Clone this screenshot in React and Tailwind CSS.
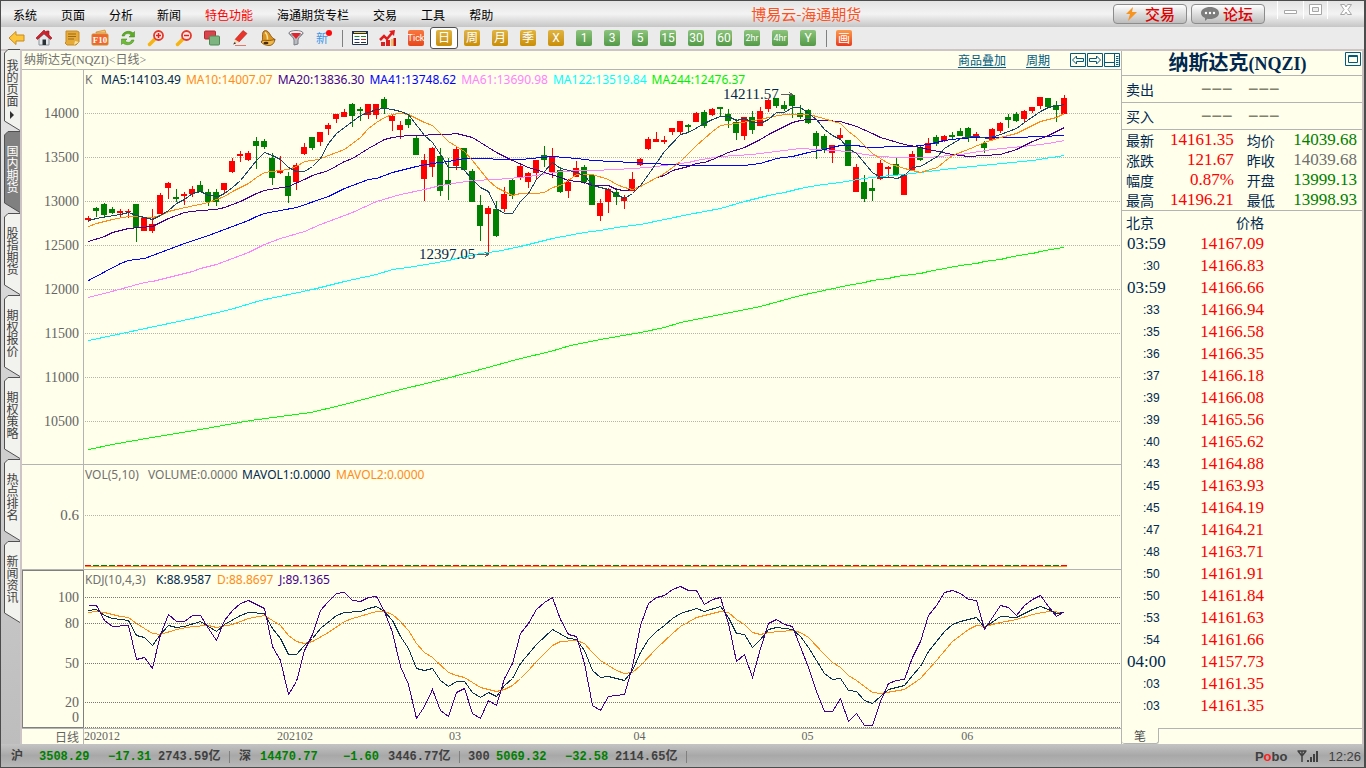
import React, { useState } from 'react';

const menuItems = ['系统', '页面', '分析', '新闻', '特色功能', '海通期货专栏', '交易', '工具', '帮助'];

const sideTabs = ['我的页面', '国内期货', '股指期货', '期权报价', '期权策略', '热点排名', '新闻资讯'];

const periods = [
  { label: '日', tone: 'gold' },
  { label: '周', tone: 'gold' },
  { label: '月', tone: 'gold' },
  { label: '季', tone: 'gold' },
  { label: 'X', tone: 'gold' },
  { label: '1', tone: 'green' },
  { label: '3', tone: 'green' },
  { label: '5', tone: 'green' },
  { label: '15', tone: 'green' },
  { label: '30', tone: 'green' },
  { label: '60', tone: 'green' },
  { label: '2hr', tone: 'green' },
  { label: '4hr', tone: 'green' },
  { label: 'Y', tone: 'green' },
];

const maLegend = [
  { text: 'MA5:14103.49', cls: 'text-[#002850]' },
  { text: 'MA10:14007.07', cls: 'text-[#ff8c14]' },
  { text: 'MA20:13836.30', cls: 'text-[#46008c]' },
  { text: 'MA41:13748.62', cls: 'text-[#0000ff]' },
  { text: 'MA61:13690.98', cls: 'text-[#ff82ff]' },
  { text: 'MA122:13519.84', cls: 'text-[#00ffff]' },
  { text: 'MA244:12476.37', cls: 'text-[#00f000]' },
];

// color, high, body top, body bottom, low
const candles = [
  ['r', 216, 218, 220, 222], ['g', 207, 208, 211, 217], ['g', 203, 204, 215, 218], ['g', 207, 209, 213, 214],
  ['r', 209, 211, 213, 217], ['r', 209, 211, 212, 218], ['g', 204, 204, 228, 242], ['r', 217, 217, 231, 231],
  ['r', 209, 224, 231, 233], ['r', 193, 195, 214, 214], ['r', 182, 183, 188, 199], ['g', 189, 197, 199, 202],
  ['r', 192, 194, 196, 205], ['r', 186, 189, 194, 197], ['g', 181, 185, 192, 192], ['g', 189, 192, 202, 206],
  ['g', 189, 192, 202, 206], ['r', 183, 183, 190, 194], ['r', 158, 161, 172, 173], ['r', 151, 154, 156, 162],
  ['r', 151, 153, 160, 161], ['g', 137, 141, 146, 169], ['g', 139, 141, 147, 149], ['g', 153, 158, 178, 185],
  ['r', 156, 171, 173, 174], ['g', 172, 176, 196, 203], ['r', 163, 165, 182, 190], ['r', 143, 147, 154, 155],
  ['g', 137, 137, 148, 150], ['r', 132, 132, 142, 146], ['r', 123, 125, 129, 135], ['r', 114, 114, 119, 123],
  ['r', 109, 112, 117, 117], ['g', 103, 104, 116, 127], ['g', 107, 109, 111, 121], ['r', 104, 104, 115, 119],
  ['r', 104, 104, 115, 119], ['g', 97, 99, 109, 114], ['r', 115, 116, 121, 131], ['r', 121, 125, 130, 139],
  ['g', 114, 119, 125, 128], ['g', 135, 138, 155, 155], ['r', 154, 160, 179, 201], ['r', 147, 148, 167, 177],
  ['g', 148, 156, 191, 196], ['g', 158, 180, 185, 200], ['r', 147, 149, 166, 170], ['g', 148, 148, 170, 171],
  ['g', 169, 171, 202, 202], ['g', 195, 205, 226, 241], ['r', 206, 208, 214, 255], ['g', 201, 209, 236, 237],
  ['r', 187, 194, 209, 212], ['g', 178, 180, 196, 199], ['r', 163, 166, 178, 180], ['r', 172, 173, 182, 188],
  ['r', 160, 160, 173, 179], ['g', 146, 155, 160, 167], ['r', 148, 156, 172, 178], ['g', 167, 170, 192, 193],
  ['r', 179, 182, 191, 198], ['r', 161, 168, 177, 177], ['g', 165, 167, 182, 184], ['g', 175, 175, 205, 205],
  ['r', 199, 203, 216, 221], ['r', 188, 189, 202, 213], ['g', 188, 192, 197, 205], ['r', 195, 198, 201, 209],
  ['r', 172, 179, 191, 191], ['r', 158, 159, 165, 166], ['r', 137, 139, 149, 150], ['r', 132, 139, 142, 142],
  ['r', 136, 140, 142, 144], ['r', 128, 128, 132, 135], ['r', 121, 121, 132, 135], ['g', 124, 125, 127, 133],
  ['r', 112, 113, 122, 122], ['g', 110, 112, 126, 128], ['r', 108, 109, 115, 116], ['g', 107, 107, 109, 117],
  ['g', 109, 114, 121, 128], ['g', 119, 122, 133, 140], ['r', 117, 117, 136, 140], ['g', 111, 117, 130, 134],
  ['r', 107, 111, 126, 126], ['r', 99, 100, 109, 112], ['g', 98, 98, 106, 108], ['g', 101, 105, 109, 111],
  ['g', 94, 95, 106, 118], ['g', 105, 113, 117, 119], ['g', 109, 110, 123, 124], ['g', 131, 133, 146, 159],
  ['g', 134, 136, 149, 153], ['r', 145, 145, 153, 163], ['r', 128, 135, 138, 140], ['g', 140, 140, 166, 166],
  ['r', 164, 167, 192, 192], ['g', 175, 182, 199, 202], ['g', 179, 188, 191, 201], ['r', 160, 163, 179, 180],
  ['r', 166, 167, 169, 177], ['g', 158, 164, 175, 175], ['r', 175, 175, 195, 195], ['r', 151, 154, 170, 170],
  ['g', 146, 147, 160, 161], ['r', 138, 143, 153, 153], ['g', 135, 137, 144, 146], ['r', 135, 136, 141, 142],
  ['g', 132, 135, 137, 139], ['g', 128, 131, 136, 136], ['g', 127, 128, 137, 142], ['r', 132, 134, 136, 141],
  ['g', 141, 143, 148, 153], ['r', 128, 129, 140, 140], ['r', 122, 123, 131, 133], ['g', 114, 117, 120, 128],
  ['g', 112, 114, 121, 122], ['r', 110, 111, 119, 122], ['r', 107, 107, 111, 113], ['r', 97, 97, 106, 109],
  ['g', 98, 98, 107, 108], ['g', 101, 105, 110, 122], ['r', 95, 98, 114, 114],
];

const priceLines = [
  {
    color: '#00ff00',
    points: '88,449 112,444 140,439 200,429 250,420 310,412 340,405 370,397 400,389 430,382 480,369 520,358 550,351 570,345 600,339 640,332 664,327 680,322 720,314 760,306 800,295 847,285 864,282 872,280 888,278 896,276 920,273 928,271 960,265 976,263 984,261 1000,259 1008,257 1024,254 1032,253 1040,251 1056,248 1064,247',
  },
  {
    color: '#00ffff',
    points: '88,340 112,335 140,329 192,318 230,309 260,300 312,289 344,281 376,274 392,269 408,267 432,263 448,260 456,258 480,253 496,251 520,246 552,238 568,235 584,232 600,230 616,227 640,224 664,219 688,214 704,211 720,208 744,201 768,195 784,192 800,188 816,185 840,182 864,178 880,176 904,174 928,171 952,168 992,164 1032,160 1064,155',
  },
  {
    color: '#ff82ff',
    points: '88,297 115,290 144,282 152,281 192,271 200,268 216,264 248,252 264,244 280,238 304,231 320,224 352,212 376,201 400,194 424,189 440,185 472,180 496,179 520,177 536,175 552,172 576,170 592,170 616,169 648,167 688,162 696,160 720,156 752,154 776,151 800,148 816,149 848,151 864,154 880,156 897,157 928,157 960,154 992,149 1032,145 1048,143 1064,140',
  },
  {
    color: '#0000ff',
    points: '88,280 120,263 128,260 136,259 144,258 184,243 208,235 248,220 256,216 264,213 280,210 296,207 328,196 344,188 368,179 376,178 392,172 416,166 432,163 448,161 464,158 488,158 496,159 520,159 552,156 576,158 592,160 632,162 688,165 704,165 744,165 760,163 776,158 792,156 808,152 824,149 840,145 856,145 868,147 880,147 888,146 912,146 928,144 944,140 960,138 976,137 1016,137 1064,135',
  },
  {
    color: '#46008c',
    points: '88,241 104,236 112,232 128,228 152,226 160,222 168,218 184,212 200,210 216,209 224,207 240,201 256,193 264,190 288,186 304,179 312,175 328,170 344,161 352,158 368,148 384,139 392,137 408,135 448,134 456,133 472,137 480,142 488,147 496,152 512,160 528,167 544,172 560,177 568,180 584,182 592,185 608,185 616,189 624,190 632,189 648,182 656,177 664,175 672,170 688,166 696,163 704,162 712,159 728,152 744,147 760,139 768,134 784,126 792,122 800,120 808,119 824,120 840,121 856,126 872,133 880,137 904,144 920,147 928,149 952,154 968,156 1000,154 1016,149 1032,141 1048,135 1064,127',
  },
  {
    color: '#ff8c14',
    points: '88,226 96,223 112,219 128,216 152,217 160,215 168,211 176,209 208,202 224,196 232,191 248,183 256,177 264,172 280,170 288,169 296,166 304,161 318,159 328,155 344,149 360,137 368,128 376,122 384,117 392,114 400,113 408,114 424,122 432,125 448,141 464,151 472,160 488,180 496,187 504,191 512,195 520,193 536,193 544,192 552,187 560,185 568,180 576,174 592,174 608,179 616,184 624,187 632,189 640,186 664,173 680,161 696,145 712,131 720,125 736,123 760,119 768,117 784,114 808,114 816,116 840,123 848,131 856,137 872,153 888,163 904,168 920,172 937,167 944,161 952,155 970,148 984,142 1000,137 1016,133 1024,129 1040,121 1056,117 1064,113',
  },
  {
    color: '#1e4664',
    points: '88,220 96,218 120,214 128,212 136,215 152,219 160,215 168,210 176,203 184,199 192,193 200,191 208,195 218,196 224,193 232,187 240,180 256,160 264,152 272,155 280,159 288,167 296,171 304,171 312,166 320,158 328,143 336,133 352,121 360,115 368,112 376,109 384,108 392,109 400,111 408,114 424,135 432,142 440,154 448,167 460,167 464,170 472,179 480,187 488,191 496,208 504,213 512,213 520,201 528,193 536,179 544,171 552,162 560,168 573,171 584,175 592,185 608,189 616,194 624,198 632,193 640,185 648,174 664,151 680,134 688,132 704,123 712,119 720,116 728,116 736,120 744,118 752,122 762,122 768,119 776,112 784,112 792,107 800,107 808,113 816,119 824,129 832,135 840,139 848,148 856,153 872,172 880,177 890,177 897,178 905,174 912,167 920,166 937,156 944,148 962,137 977,136 987,138 1000,134 1016,128 1024,122 1040,111 1048,107 1064,104',
  },
];

const kdjLines = [
  {
    color: '#ff8c14',
    points: '88,612 96,611 104,612 120,616 128,617 136,623 152,633 160,634 176,629 192,626 208,625 216,627 232,624 248,618 264,615 272,620 280,625 288,635 296,641 304,643 312,641 328,632 344,621 352,618 376,611 384,611 392,614 400,621 408,630 416,643 424,652 432,657 448,672 456,675 464,677 480,687 496,691 504,689 512,685 520,678 528,670 536,661 552,645 560,641 576,640 584,643 592,652 600,660 616,670 624,673 632,672 640,665 656,648 672,633 680,626 696,617 720,611 728,612 736,619 744,624 752,632 760,634 768,632 792,630 800,632 808,637 824,654 832,662 840,667 848,675 856,680 872,692 880,693 904,689 920,678 936,660 952,641 968,629 976,625 984,626 1000,622 1016,619 1032,614 1048,611 1064,612',
  },
  {
    color: '#0a3250',
    points: '88,610 96,609 104,615 112,618 128,620 136,635 144,637 152,645 160,634 168,625 176,627 184,626 200,621 208,626 216,631 224,624 240,615 248,612 264,613 272,628 280,638 288,654 296,654 304,645 312,638 320,628 336,615 344,612 360,611 368,608 376,606 384,611 392,620 400,636 408,648 416,668 424,670 432,668 440,680 448,686 456,681 464,681 472,692 480,697 488,692 496,696 504,685 512,678 520,663 536,644 552,629 568,638 576,639 584,650 592,670 600,677 608,676 624,680 632,670 640,652 648,639 656,631 664,625 672,618 680,613 696,608 704,611 720,606 728,617 736,633 744,634 752,647 760,639 768,629 776,627 792,629 800,636 808,647 824,673 832,679 840,678 848,690 856,691 864,700 872,703 888,689 904,685 912,675 920,666 928,651 944,631 952,624 960,621 976,617 984,627 1000,616 1016,617 1032,609 1040,606 1048,609 1056,613 1064,612',
  },
  {
    color: '#46008c',
    points: '88,605 96,605 104,620 112,626 128,625 136,659 144,657 152,668 160,634 168,614 176,621 184,621 192,615 200,615 208,628 216,640 224,620 232,610 240,603 248,600 264,608 272,646 280,660 288,694 296,681 304,650 312,634 320,610 328,601 336,593 344,592 352,600 360,601 368,597 376,596 384,611 392,632 400,666 408,684 416,718 424,706 432,689 440,710 448,716 456,692 464,688 472,713 480,718 488,700 496,705 504,678 512,663 520,633 528,623 536,609 544,602 552,597 560,619 568,634 576,636 584,663 592,705 600,710 608,696 624,694 632,666 640,625 648,603 656,597 664,595 672,589 680,586 688,590 696,590 704,604 712,599 720,597 728,623 736,661 744,654 752,677 760,648 768,623 776,619 784,624 792,626 808,667 816,691 824,711 832,711 840,698 848,721 856,713 864,725 872,725 880,701 888,683 896,680 904,679 912,657 920,641 928,615 936,605 944,592 952,590 960,593 968,599 976,600 984,629 992,617 1000,605 1008,607 1016,615 1024,605 1032,599 1040,595 1048,606 1056,616 1064,611',
  },
];

// label and share of the time axis, in percent
const timeAxis = [
  ['202012', 18.6],
  ['202102', 16.6],
  ['03', 17.8],
  ['04', 16.2],
  ['05', 15.4],
  ['06', 15.4],
];

const quotes = [
  ['最新', '14161.35', 'text-[#ff0000]', '均价', '14039.68', 'text-[#008000]'],
  ['涨跌', '121.67', 'text-[#ff0000]', '昨收', '14039.68', 'text-[#707070]'],
  ['幅度', '0.87%', 'text-[#ff0000]', '开盘', '13999.13', 'text-[#008000]'],
  ['最高', '14196.21', 'text-[#ff0000]', '最低', '13998.93', 'text-[#008000]'],
];

const ticks = [
  ['03:59', '14167.09'],
  [':30', '14166.83'],
  ['03:59', '14166.66'],
  [':33', '14166.94'],
  [':35', '14166.58'],
  [':36', '14166.35'],
  [':37', '14166.18'],
  [':39', '14166.08'],
  [':39', '14165.56'],
  [':40', '14165.62'],
  [':43', '14164.88'],
  [':45', '14163.93'],
  [':45', '14164.19'],
  [':47', '14164.21'],
  [':48', '14163.71'],
  [':50', '14161.91'],
  [':50', '14161.84'],
  [':53', '14161.63'],
  [':54', '14161.66'],
  ['04:00', '14157.73'],
  [':03', '14161.35'],
  [':03', '14161.35'],
];

const cjk = "font-['Noto_Sans_CJK_SC',sans-serif]";
const num = "font-['Liberation_Serif','Noto_Sans_CJK_SC',serif]";
const ui = "font-['Noto_Sans','Noto_Sans_CJK_SC',sans-serif]";
const statusFont = "font-['Liberation_Mono','Noto_Sans_CJK_SC',monospace]";

function ToolIcon({ name }) {
  const shapes = {
    back: <path d="M1 8 8 1.5V5h8v6H8v3.5z" fill="#fdc63a" stroke="#c98a1c" />,
    home: (
      <>
        <path d="M3 8v7h10V8L8 4z" fill="#e4e8ea" stroke="#8b9499" />
        <path d="M0 8 8 0l2.500 2.500V1H13v4l3 3-1.500 1.500L8 3.500 1.500 9.500z" fill="#d3202b" stroke="#8e141b" strokeWidth=".6" />
        <path d="M6.500 9.500h3.500V15H6.500z" fill="#2a3236" />
      </>
    ),
    note: (
      <>
        <path d="M2 1h11l2 1v10l-3 3H3L1 13l1-1z" fill="#e5aa38" stroke="#c58b22" />
        <path d="M4 4h8M4 6.500h8M4 9h6" stroke="#9c6a18" />
        <path d="m10 15 1-4 4 1z" fill="#f8e2a8" />
      </>
    ),
    f10: (
      <>
        <path d="m4 2 9-2 1 3H4z" fill="#f9c467" stroke="#c77a1d" strokeWidth=".6" />
        <rect x="0" y="4" width="16" height="11" rx="1" fill="#f2652a" stroke="#d08a2c" />
        <text x="8" y="13" fontSize="9" fontWeight="bold" textAnchor="middle" fill="#fff" fontFamily="Liberation Serif, serif">F10</text>
      </>
    ),
    refresh: (
      <>
        <path d="M2 6C3 1 10 0 13 3l1.500-1.500V7H9l2-2C9 3 5 3 4.500 6z" fill="#5cad24" stroke="#3d8212" strokeWidth=".5" />
        <path d="M14 10c-1 5-8 6-11 3l-1.500 1.500V9H7l-2 2c2 2 6 2 6.500-1z" fill="#6fbd35" stroke="#3d8212" strokeWidth=".5" />
      </>
    ),
    zoomIn: (
      <>
        <path d="m1.500 14.500 5-5" stroke="#f6b414" strokeWidth="3.500" strokeLinecap="round" />
        <circle cx="10.500" cy="5.500" r="4.500" fill="#ffe9e4" stroke="#e03a2c" strokeWidth="1.800" />
        <path d="M8 5.500h5M10.500 3v5" stroke="#e0201c" strokeWidth="1.500" />
      </>
    ),
    zoomOut: (
      <>
        <path d="m1.500 14.500 5-5" stroke="#f6b414" strokeWidth="3.500" strokeLinecap="round" />
        <circle cx="10.500" cy="5.500" r="4.500" fill="#ffe9e4" stroke="#e03a2c" strokeWidth="1.800" />
        <path d="M8 5.500h5" stroke="#e0201c" strokeWidth="1.500" />
      </>
    ),
    layers: (
      <>
        <rect x=".5" y="1" width="11" height="8" rx="1" fill="#d9434b" stroke="#b32a33" />
        <rect x="5.500" y="6" width="10" height="9" rx="1" fill="#7db47f" stroke="#4f8a55" />
      </>
    ),
    pencil: (
      <>
        <path d="M3 9.500 11 .5l4 3L7 12z" fill="#e8342a" stroke="#b3231b" strokeWidth=".6" />
        <path d="M3 9.500 7 12l-5.500 2z" fill="#f8d9a8" />
        <path d="m1 14.500 1.800-2.500 1.200 1.500z" fill="#303030" />
        <path d="M3 15.500h11" stroke="#e0786c" />
      </>
    ),
    bell: (
      <>
        <path d="M4 1c2-1 4 0 5.500 2.500C11 6 12 8 15 9.500L11 15 1 12c2-2 1.500-3 1.500-6 0-2 0-4 1.500-5z" fill="#dc9420" stroke="#7d4b0c" strokeWidth=".8" />
        <path d="M1 12c1-1.500 3-2 6-1.500s7-1 8-1l-1 3c-1 2-3 3-5 3-3 0-6-1-8-3.500z" fill="#f0b848" stroke="#7d4b0c" strokeWidth=".8" />
        <path d="M5 2.500c2 1 2.500 4 2.500 7" stroke="#fbe19a" fill="none" strokeWidth="1.500" />
        <ellipse cx="6" cy="13" rx="2.500" ry="1.300" fill="#4a2a06" />
      </>
    ),
    filter: (
      <>
        <path d="M1 3c0 2 5 4 5 7v5l4-1v-4c0-3 5-5 5-7z" fill="#b9bdc2" stroke="#7b7f86" />
        <ellipse cx="8" cy="3" rx="7" ry="2.500" fill="#eef0f2" stroke="#7b7f86" />
        <path d="M3 3h10L8 9z" fill="#e2222c" />
      </>
    ),
    news: (
      <>
        <text x="0" y="13" fontSize="12" fill="#3c96e8" fontFamily="Noto Sans CJK SC, sans-serif">新</text>
        <circle cx="13" cy="3" r="3" fill="#ff0a0a" />
      </>
    ),
    table: (
      <>
        <path d="M.5 1.500h15v13H.5z" fill="#fff" stroke="#24334a" />
        <path d="M0 1h16v3H0z" fill="#24334a" />
        <path d="M2 2.500h12" stroke="#f3cf45" />
        <path d="M2.500 6.500h5" stroke="#1c8a2a" />
        <path d="M9 6.500h5" stroke="#1c8a2a" />
        <path d="M2.500 9.500h5" stroke="#2038c0" />
        <path d="M9 9.500h5" stroke="#d32020" />
        <path d="M2.500 12.500h5M9 12.500h5" stroke="#24334a" />
      </>
    ),
    chart: (
      <>
        <path d="M1 12h4v4H1zM6 10h4v6H6z" fill="#d72323" />
        <path d="M11 9h2.500v7H11z" fill="#f7c25c" />
        <path d="M13.500 8H16v8h-2.500z" fill="#c01818" />
        <path d="m0 10 4-4 3 3 5-6" fill="none" stroke="#e01c1c" strokeWidth="2.500" />
        <path d="m9 1 6-1-1 6z" fill="#e01c1c" />
      </>
    ),
  };
  return (
    <svg viewBox="0 0 16 16" className="h-4 w-4 overflow-visible" aria-hidden="true">
      {shapes[name]}
    </svg>
  );
}

function IconButton({ name, label }) {
  return (
    <button type="button" aria-label={label} className="flex h-[22px] w-7 shrink-0 items-center justify-center">
      <ToolIcon name={name} />
    </button>
  );
}

function Separator() {
  return (
    <div className="flex w-2 shrink-0 justify-center">
      <div className="h-[17px] w-px bg-[#808080]" />
    </div>
  );
}

function MenuBar() {
  return (
    <header className="flex h-[26px] items-center bg-linear-to-b from-[#e4e4e4] via-[#f3f3f3] to-[#c6c6c6]">
      <nav className={`flex shrink-0 gap-6 pt-px pl-3 text-xs leading-4 text-black ${cjk}`}>
        {menuItems.map((item) => (
          <button key={item} type="button" className={item === '特色功能' ? 'text-[#ff0000]' : ''}>
            {item}
          </button>
        ))}
      </nav>
      <h1 className={`ml-[258px] shrink-0 text-[15px] leading-5 text-[#ff501e] ${cjk}`}>博易云-海通期货</h1>
      <div className="ml-auto flex items-center gap-1">
        <button
          type="button"
          className={`flex h-5 w-[74px] items-center gap-2 rounded-[4px] border border-[#8c8c8c] bg-linear-to-b from-white to-[#bdbdbd] pl-3 text-[15px] leading-4 font-medium text-[#e00000] ${cjk}`}
        >
          <svg viewBox="0 0 11 14" className="h-[14px] w-[11px]" aria-hidden="true">
            <path d="M7 0 0 7h4l-2 7 9-9H6z" fill="#f79420" />
          </svg>
          交易
        </button>
        <button
          type="button"
          className={`flex h-5 w-[74px] items-center gap-1 rounded-[4px] border border-[#8c8c8c] bg-linear-to-b from-white to-[#bdbdbd] pl-[9px] text-[15px] leading-4 font-medium text-[#e00000] ${cjk}`}
        >
          <svg viewBox="0 0 18 14" className="h-[14px] w-[18px]" aria-hidden="true">
            <path d="M9 0c5 0 9 2.500 9 6s-4 6-9 6c-1 0-2 0-2.500-.2L4 14v-3C1.500 10 0 8 0 6c0-3.500 4-6 9-6z" fill="#7d7d7d" />
            <circle cx="5" cy="6" r="1.200" fill="#fff" />
            <circle cx="9" cy="6" r="1.200" fill="#fff" />
            <circle cx="13" cy="6" r="1.200" fill="#fff" />
          </svg>
          论坛
        </button>
      </div>
      <div className="ml-3 flex h-[18px] shrink-0 self-start pr-px">
        <button type="button" aria-label="最小化" className="flex w-[26px] justify-center border-l border-white pt-[9px]">
          <svg viewBox="0 0 13 4" className="h-1 w-[13px]" aria-hidden="true">
            <path d="M.5.5h12v3H.5z" fill="#fff" stroke="#a6a6a6" />
          </svg>
        </button>
        <button type="button" aria-label="最大化" className="flex w-6 justify-center border-l border-white pt-[3px]">
          <svg viewBox="0 0 13 11" className="h-[11px] w-[13px]" aria-hidden="true">
            <path d="M.5.500h12v10H.5z" fill="#fff" stroke="#a6a6a6" />
            <path d="M3.500 3.500h6v4h-6z" fill="#eee" stroke="#a6a6a6" />
          </svg>
        </button>
        <button type="button" aria-label="关闭" className="flex w-9 justify-center border-l border-white pt-[3px]">
          <svg viewBox="0 0 12 11" className="h-[11px] w-3" aria-hidden="true">
            <path d="M.5.500h4L6 3 7.500.500h4L8 5.500l3.500 5h-4L6 8l-1.500 2.500h-4L4 5.500z" fill="#fff" stroke="#a6a6a6" />
          </svg>
        </button>
      </div>
    </header>
  );
}

function Toolbar() {
  const [period, setPeriod] = useState('日');
  return (
    <div className="flex h-[22px] items-center bg-[#ebebeb] pl-px">
      <IconButton name="back" label="后退" />
      <IconButton name="home" label="主页" />
      <IconButton name="note" label="公告" />
      <IconButton name="f10" label="基本资料" />
      <IconButton name="refresh" label="刷新" />
      <IconButton name="zoomIn" label="放大" />
      <IconButton name="zoomOut" label="缩小" />
      <IconButton name="layers" label="叠加" />
      <IconButton name="pencil" label="画线" />
      <IconButton name="bell" label="预警" />
      <IconButton name="filter" label="筛选" />
      <IconButton name="news" label="新功能" />
      <Separator />
      <IconButton name="table" label="报价" />
      <IconButton name="chart" label="走势" />
      <button type="button" className="flex h-[22px] w-7 shrink-0 items-center justify-center">
        <span className="flex h-4 w-4 items-center justify-center rounded-[2px] bg-linear-to-b from-[#f9773f] to-[#e5471b] font-['Roboto',sans-serif] text-[9px] leading-4 text-white">
          Tick
        </span>
      </button>
      {periods.map((p) => (
        <button
          key={p.label}
          type="button"
          onClick={() => setPeriod(p.label)}
          className={`flex h-[22px] w-7 shrink-0 items-center justify-center ${
            period === p.label ? 'rounded-[3px] border border-[#505050] bg-white' : ''
          }`}
        >
          <span
            className={`flex h-4 w-4 items-center justify-center rounded-[2px] bg-linear-to-b leading-4 text-white ${
              p.tone === 'gold' ? 'from-[#e0b440] to-[#c98e00]' : 'from-[#8cc47c] to-[#549a48]'
            } ${
              p.label.length === 3
                ? "font-['Roboto',sans-serif] text-[9px]"
                : "font-['Roboto','Noto_Sans_CJK_SC',sans-serif] text-[12px]"
            }`}
          >
            {p.label}
          </span>
        </button>
      ))}
      <Separator />
      <button type="button" className="flex h-[22px] w-7 shrink-0 items-center justify-center">
        <span className={`flex h-4 w-4 items-center justify-center rounded-[2px] bg-linear-to-b from-[#fb9a4c] to-[#e8351c] text-[12px] leading-4 text-white ${cjk}`}>
          画
        </span>
      </button>
    </div>
  );
}

function SideTabs() {
  const [active, setActive] = useState('国内期货');
  return (
    <aside className="flex w-[21px] shrink-0 flex-col items-end border-r-2 border-[#cdc5c5] bg-linear-to-b from-[#e6e6e6] to-[#bdbdbd]">
      {sideTabs.map((tab) => (
        <button
          key={tab}
          type="button"
          onClick={() => setActive(tab)}
          className={`relative h-[82px] w-4 shrink-0 text-xs leading-4 first:-mt-0.5 ${cjk} ${
            active === tab ? 'text-white' : 'text-[#404040]'
          }`}
        >
          <svg viewBox="0 0 16 82" className="absolute inset-0 h-[82px] w-4" aria-hidden="true">
            <path
              d="M16 .5H4L.5 4v68l15.500 9.500"
              fill={active === tab ? '#808080' : '#f2f2ee'}
              stroke="#505050"
            />
          </svg>
          <span className={`relative flex h-full flex-col items-center ${tab === '我的页面' ? 'pt-[10px]' : 'pt-[14px]'}`}>
            <span className="[writing-mode:vertical-rl]">{tab}</span>
            {tab === '我的页面' && (
              <svg viewBox="0 0 4 8" className="mt-1 h-2 w-1" aria-hidden="true">
                <path d="M0 0v8l4-4z" fill="#303030" />
              </svg>
            )}
          </span>
        </button>
      ))}
    </aside>
  );
}

function ChartHeader() {
  return (
    <div className="flex h-[19px] items-center border-b border-[#b4b4b4] pr-px pl-0.5">
      <h2 className={`text-xs leading-4 text-[#707070] ${num}`}>纳斯达克(NQZI)&lt;日线&gt;</h2>
      <div className={`ml-auto flex items-center text-xs leading-4 text-[#005a82] underline underline-offset-2 ${cjk}`}>
        <a href="#overlay">商品叠加</a>
        <a href="#period" className="ml-5">周期</a>
      </div>
      <div className="ml-5 flex gap-px">
        <button type="button" aria-label="左移">
          <svg viewBox="0 0 16 14" className="h-[14px] w-4" fill="none" stroke="#005a82" aria-hidden="true">
            <path d="M.5.500h15v13H.5zM2.500 7l4-4v2.500h7v3h-7V11z" />
          </svg>
        </button>
        <button type="button" aria-label="右移">
          <svg viewBox="0 0 16 14" className="h-[14px] w-4" fill="none" stroke="#005a82" aria-hidden="true">
            <path d="M.5.500h15v13H.5zM13.500 7l-4-4v2.500h-7v3h7V11z" />
          </svg>
        </button>
        <button type="button" aria-label="右侧栏">
          <svg viewBox="0 0 16 14" className="h-[14px] w-4" fill="none" stroke="#005a82" aria-hidden="true">
            <path d="M.5.500h15v13H.5zM10.500 0v14M0 9.500h10M12 3.500h2.500M12 5.500h2.500M12 7.500h2.500M12 9.500h2.500M12 11.500h2.500" />
          </svg>
        </button>
      </div>
    </div>
  );
}

function GridLines({ rows, color }) {
  return rows.map((y) => (
    <line key={y} x1="85" x2="1121" y1={y + 0.5} y2={y + 0.5} stroke={color} strokeDasharray="1 1" />
  ));
}

function Curves({ lines }) {
  return (
    <g fill="none" transform="translate(0.5 0.5)">
      {lines.map((line) => (
        <polyline key={line.color} points={line.points} stroke={line.color} />
      ))}
    </g>
  );
}

function PricePane() {
  return (
    <section className="flex h-[395px] border-b border-[#b4b4b4]">
      <div className={`w-[62px] shrink-0 border-r border-[#b4b4b4] pt-[22px] pr-1 text-right text-sm text-[#646464] ${num}`}>
        {['14000', '13500', '13000', '12500', '12000', '11500', '11000', '10500'].map((label) => (
          <div key={label} className="h-11 leading-[44px]">{label}</div>
        ))}
      </div>
      <div className="min-w-0 flex-1">
        <div className={`flex h-5 gap-[5px] pl-px text-xs leading-5 whitespace-nowrap ${ui}`}>
          <span className="w-[11px] text-[#707070]">K</span>
          {maLegend.map((ma) => (
            <span key={ma.text} className={ma.cls}>{ma.text}</span>
          ))}
        </div>
        <svg viewBox="84 90 1037 374" preserveAspectRatio="none" shapeRendering="crispEdges" className="block h-[374px] w-full overflow-visible">
          <GridLines rows={[113, 157, 201, 245, 289, 333, 377, 421]} color="#b4b4aa" />
          {candles.map(([tone, high, top, bottom, low], i) => {
            const x = 88 + i * 8;
            const fill = tone === 'r' ? '#ff0000' : '#008000';
            return (
              <g key={x} fill={fill}>
                <rect x={x} y={high} width="1" height={low - high} />
                <rect x={x - 3} y={top} width="6" height={bottom - top} />
              </g>
            );
          })}
          <Curves lines={priceLines} />
          <g className={num} fontSize="15" fill="#002850">
            <text x="723" y="99">14211.57</text>
            <text x="419" y="259">12397.05</text>
          </g>
          <path d="M781 94.500h11M789 92l3 2.500-3 2.500M477 254.500h11M485 252l3 2.500-3 2.500" fill="none" stroke="#606060" />
        </svg>
      </div>
    </section>
  );
}

function VolumePane() {
  return (
    <section className="flex h-[105px] border-b border-[#b4b4b4]">
      <div className={`w-[62px] shrink-0 border-r border-[#b4b4b4] pr-1 text-right text-[15px] leading-[101px] text-[#646464] ${num}`}>
        0.6
      </div>
      <div className="min-w-0 flex-1">
        <div className={`flex h-5 gap-1 pl-px text-xs leading-5 whitespace-nowrap ${ui}`}>
          <span className="w-[59px] text-[#707070]">VOL(5,10)</span>
          <span className="w-[90px] text-[#707070]">VOLUME:0.0000</span>
          <span className="w-[90px] text-[#002850]">MAVOL1:0.0000</span>
          <span className="text-[#ff8c14]">MAVOL2:0.0000</span>
        </div>
        <svg viewBox="84 485 1037 84" preserveAspectRatio="none" shapeRendering="crispEdges" className="block h-[84px] w-full">
          <GridLines rows={[515]} color="#b4b4aa" />
          <line x1="85" x2="1067" y1="566.500" y2="566.500" stroke="#ff8c14" />
          {candles.map(([tone], i) => (
            <rect key={i} x={85 + i * 8} y="565" width="6" height="1" fill={tone === 'r' ? '#ff0000' : '#008000'} />
          ))}
        </svg>
      </div>
    </section>
  );
}

function KdjPane() {
  return (
    <section className="flex h-[159px] border-b border-[#b4b4b4]">
      <div className={`h-[158px] w-[62px] shrink-0 border border-[#808080] pt-[19px] pr-1 text-right text-sm leading-[15px] text-[#646464] ${num}`}>
        <div>100</div>
        <div className="mt-[11px]">80</div>
        <div className="mt-[25px]">50</div>
        <div className="mt-6">20</div>
        <div>0</div>
      </div>
      <div className="min-w-0 flex-1">
        <div className={`flex h-4 gap-1 pt-1 pl-px text-xs leading-3 whitespace-nowrap ${ui}`}>
          <span className="w-[67px] text-[#707070]">KDJ(10,4,3)</span>
          <span className="w-[57px] text-[#002850]">K:88.9587</span>
          <span className="w-[58px] text-[#ff8c14]">D:88.8697</span>
          <span className="text-[#46008c]">J:89.1365</span>
        </div>
        <svg viewBox="84 586 1037 142" preserveAspectRatio="none" shapeRendering="crispEdges" className="block h-[142px] w-full">
          <GridLines rows={[597, 623, 663, 702, 727]} color="#787870" />
          <Curves lines={kdjLines} />
        </svg>
      </div>
    </section>
  );
}

function TimeAxis() {
  return (
    <div className="flex h-[15px] text-xs leading-[15px] text-[#646464]">
      <div className={`w-[62px] shrink-0 border-r border-[#b4b4b4] pr-1 text-right ${cjk}`}>日线</div>
      <div className={`flex min-w-0 flex-1 ${num}`}>
        {timeAxis.map(([label, share]) => (
          <span key={label} style={{ width: `${share}%` }}>{label}</span>
        ))}
      </div>
    </div>
  );
}

function QuotePanel() {
  return (
    <aside className="flex w-[243px] shrink-0 flex-col border-r-2 border-l border-r-[#c8c0c0] border-l-[#b4b4b4] text-[#002850]">
      <div className="flex h-[25px] items-center border-b border-[#b4b4b4] pr-px">
        <div className="w-2" />
        <h2 className={`flex-1 text-center text-xl leading-6 font-bold ${cjk}`}>
          纳斯达克<span className="font-['Liberation_Serif',serif] text-lg leading-6">(NQZI)</span>
        </h2>
        <button type="button" aria-label="最大化面板" className="self-start pt-px">
          <svg viewBox="0 0 16 14" className="h-[14px] w-4" fill="none" stroke="#005a82" aria-hidden="true">
            <path d="M.5.500h15v13H.5zM3.500 3.500h9v7h-9zM3 4.500h10" />
          </svg>
        </button>
      </div>
      {['卖出', '买入'].map((side) => (
        <div key={side} className="flex h-[27px] items-center border-b border-[#b4b4b4] pl-1">
          <span className={`w-[75px] text-sm leading-5 ${cjk}`}>{side}</span>
          <span className="w-[47px] font-['Liberation_Sans',sans-serif] text-lg leading-5 text-[#80806e]">−−−</span>
          <span className="font-['Liberation_Sans',sans-serif] text-lg leading-5 text-[#80806e]">−−−</span>
        </div>
      ))}
      <table className="w-full border-b border-[#b4b4b4]">
        <tbody>
          {quotes.map(([label, value, tone, label2, value2, tone2]) => (
            <tr key={label} className="h-5">
              <th scope="row" className={`p-0 pl-1 text-left text-sm leading-5 font-normal ${cjk}`}>{label}</th>
              <td className={`p-0 text-right text-[17px] leading-5 ${num} ${tone}`}>{value}</td>
              <th scope="row" className={`p-0 pl-[13px] text-left text-sm leading-5 font-normal ${cjk}`}>{label2}</th>
              <td className={`p-0 pr-[5px] text-right text-[17px] leading-5 ${num} ${tone2}`}>{value2}</td>
            </tr>
          ))}
        </tbody>
      </table>
      <table className="w-[142px]">
        <thead>
          <tr className={`h-[22px] text-sm leading-5 ${cjk}`}>
            <th className="p-0 pl-1 text-left font-normal">北京</th>
            <th className="p-0 text-right font-normal">价格</th>
          </tr>
        </thead>
        <tbody className={num}>
          {ticks.map(([time, price], i) => (
            <tr key={i} className="h-[22px] leading-[22px]">
              {time.length > 3 ? (
                <td className="p-0 pl-[5px] text-[17px]">{time}</td>
              ) : (
                <td className="p-0 pl-[21px] font-['Liberation_Sans',sans-serif] text-xs">{time}</td>
              )}
              <td className="p-0 text-right text-[17px] text-[#ff0000]">{price}</td>
            </tr>
          ))}
        </tbody>
      </table>
      <div className="mt-auto flex h-4">
        <button
          type="button"
          className={`h-4 w-[37px] rounded-b-[3px] border-r border-b border-[#b4b4b4] text-xs leading-4 text-[#505050] ${cjk}`}
        >
          笔
        </button>
        <div className="flex-1 border-t border-[#b4b4b4]" />
      </div>
    </aside>
  );
}

function StatusBar() {
  return (
    <footer className={`flex h-[23px] items-center bg-linear-to-b from-[#c4c4c4] via-[#a8a8a8] to-[#b8b8b8] pt-0.5 pl-[10px] text-xs leading-4 font-bold whitespace-nowrap text-[#404040] ${statusFont}`}>
      <span className="w-7">沪</span>
      <span className="w-[69px] text-[#008000]">3508.29</span>
      <span className="w-[50px] text-[#008000]">−17.31</span>
      <span className="w-[71px]">2743.59亿</span>
      <span className="h-3 w-px bg-[#808080]" />
      <span className="ml-[9px] w-[21px]">深</span>
      <span className="w-[83px] text-[#008000]">14470.77</span>
      <span className="w-[45px] text-[#008000]">−1.60</span>
      <span className="w-[71px]">3446.77亿</span>
      <span className="h-3 w-px bg-[#808080]" />
      <span className="ml-2 w-7">300</span>
      <span className="w-[69px] text-[#008000]">5069.32</span>
      <span className="w-[50px] text-[#008000]">−32.58</span>
      <span className="w-[71px]">2114.65亿</span>
      <span className="h-3 w-px bg-[#808080]" />
      <span className="ml-auto font-['Liberation_Sans',sans-serif] text-[13px]">
        P<span className="text-[#ff2020]">o</span>bo
      </span>
      <svg viewBox="0 0 21 13" className="ml-[10px] h-[13px] w-[21px]" fill="none" stroke="#404040" aria-hidden="true">
        <path d="M.5 1h9M1 1l4 5 4-5M5 1v11" strokeWidth="1.500" />
        <path d="M11 10v2M14 7v5M17 4v8M20 1v11" strokeWidth="2" />
      </svg>
      <span className="mr-[3px] ml-[10px] font-['Liberation_Sans',sans-serif] text-[13px] font-normal">12:26</span>
    </footer>
  );
}

export default function App() {
  return (
    <div className="flex min-h-screen flex-col border-t border-r-2 border-b border-l border-[#4c4c4c] bg-[#ffffeb]">
      <MenuBar />
      <Toolbar />
      <main className="flex flex-1 border-t-2 border-[#cdc5c5]">
        <SideTabs />
        <div className="flex min-w-0 flex-1 flex-col">
          <ChartHeader />
          <PricePane />
          <VolumePane />
          <KdjPane />
          <TimeAxis />
        </div>
        <QuotePanel />
      </main>
      <StatusBar />
    </div>
  );
}
